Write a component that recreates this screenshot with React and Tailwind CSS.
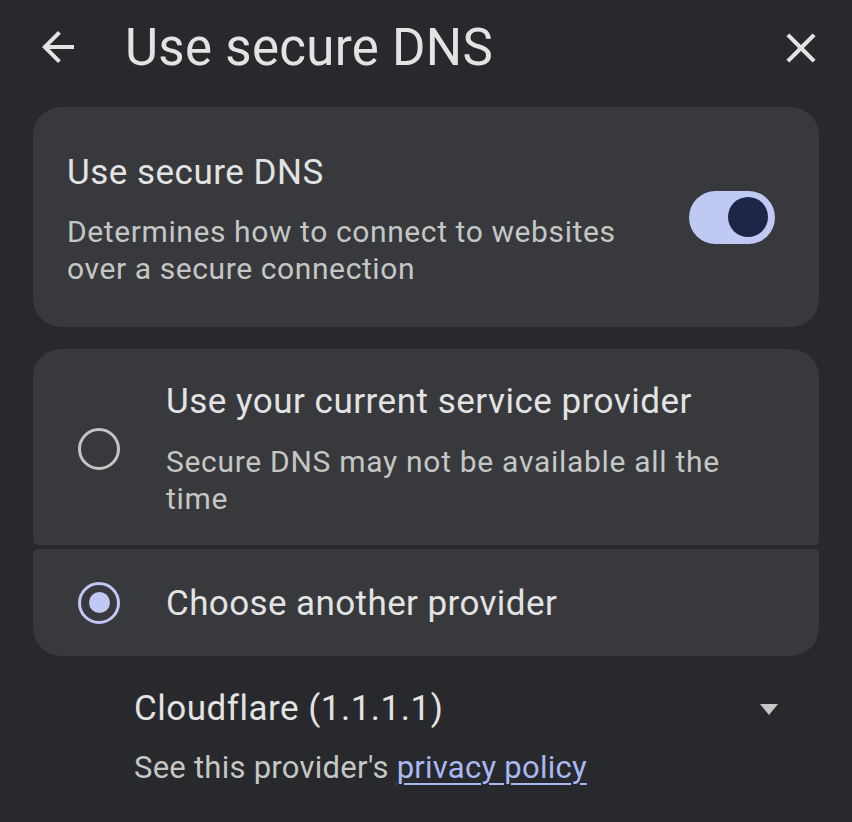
import { useState } from "react";

function BackIcon() {
  return (
    <svg width="48" height="48" viewBox="0 0 24 24" fill="#e3e3e3">
      <path d="M20 11H7.83l5.59-5.59L12 4l-8 8 8 8 1.41-1.41L7.83 13H20v-2z" />
    </svg>
  );
}

function CloseIcon() {
  return (
    <svg width="50" height="50" viewBox="0 0 24 24" fill="#e3e3e3">
      <path d="M19 6.41L17.59 5 12 10.59 6.41 5 5 6.41 10.59 12 5 17.59 6.41 19 12 13.41 17.59 19 19 17.59 13.41 12z" />
    </svg>
  );
}

function Radio({ checked }) {
  return (
    <div
      className={`w-[42px] h-[42px] rounded-full border-[3.5px] flex items-center justify-center shrink-0 ${
        checked ? "border-[#c0c8f4]" : "border-[#c4c4c4]"
      }`}
    >
      {checked && <div className="w-[21px] h-[21px] rounded-full bg-[#c0c8f4]" />}
    </div>
  );
}

export default function App() {
  const [secure, setSecure] = useState(true);
  const [choice, setChoice] = useState("other");

  return (
    <div
      className="w-[852px] h-[822px] bg-[#28292c] overflow-hidden text-[#e3e3e3]"
      style={{ fontFamily: "Roboto, 'Noto Sans', sans-serif" }}
    >
      {/* Header */}
      <div className="flex items-center h-[96px] pl-[34px] pr-[26px]">
        <button className="shrink-0 mt-[-2px]">
          <BackIcon />
        </button>
        <h1 className="ml-[43px] text-[51px] leading-[60px] tracking-[0.3px] text-[#e3e3e3] flex-1">
          Use secure DNS
        </h1>
        <button className="shrink-0">
          <CloseIcon />
        </button>
      </div>

      <div className="px-[33px] pt-[11px]">
        {/* Toggle card */}
        <div className="bg-[#38393c] rounded-[28px] flex items-center pl-[34px] pr-[44px] pt-[44px] pb-[40px]">
          <div className="flex-1">
            <div className="text-[35px] leading-[44px] tracking-[0.5px]">Use secure DNS</div>
            <div className="mt-[18px] text-[30px] leading-[37px] tracking-[0.6px] text-[#c4c7c5] w-[600px]">
              Determines how to connect to websites over a secure connection
            </div>
          </div>
          <button
            onClick={() => setSecure(!secure)}
            className={`w-[86px] h-[53px] rounded-full flex items-center px-[7px] shrink-0 mt-[-4px] ${
              secure ? "bg-[#c0c8f4] justify-end" : "bg-[#5f6368] justify-start"
            }`}
          >
            <div className="w-[40px] h-[40px] rounded-full bg-[#1f2546]" />
          </button>
        </div>

        {/* Radio cards */}
        <div className="mt-[22px] flex flex-col gap-[4px]">
          <div
            onClick={() => setChoice("current")}
            className="bg-[#38393c] rounded-t-[28px] rounded-b-[5px] flex items-center pl-[45px] pr-[30px] pt-[32px] pb-[28px]"
          >
            <Radio checked={choice === "current"} />
            <div className="ml-[46px]">
              <div className="text-[35px] leading-[42px] tracking-[0.5px]">Use your current service provider</div>
              <div className="mt-[20px] text-[30px] leading-[37px] tracking-[0.7px] text-[#c4c7c5]">
                Secure DNS may not be available all the
                <br />
                time
              </div>
            </div>
          </div>
          <div
            onClick={() => setChoice("other")}
            className="bg-[#38393c] rounded-b-[28px] rounded-t-[5px] flex items-center pl-[45px] pr-[40px] h-[107px]"
          >
            <Radio checked={choice === "other"} />
            <div className="ml-[46px] mt-[3px] text-[35px] leading-[42px] tracking-[0.4px]">Choose another provider</div>
          </div>
        </div>

        {/* Provider select */}
        <div className="pl-[101px] pr-[41px] pt-[31px]">
          <div className="flex items-center justify-between h-[44px]">
            <span className="text-[35px] leading-[44px] tracking-[0.5px]">Cloudflare (1.1.1.1)</span>
            <svg width="18" height="11" viewBox="0 0 18 11">
              <polygon points="0,0 18,0 9,11" fill="#c4c7c5" />
            </svg>
          </div>
          <div className="mt-[17px] text-[31px] leading-[40px] tracking-[0.25px] text-[#c4c7c5]">
            See this provider's{" "}
            <a href="#" className="text-[#a8b8f2] underline underline-offset-[5px] decoration-[2px]">
              privacy policy
            </a>
          </div>
        </div>
      </div>
    </div>
  );
}
